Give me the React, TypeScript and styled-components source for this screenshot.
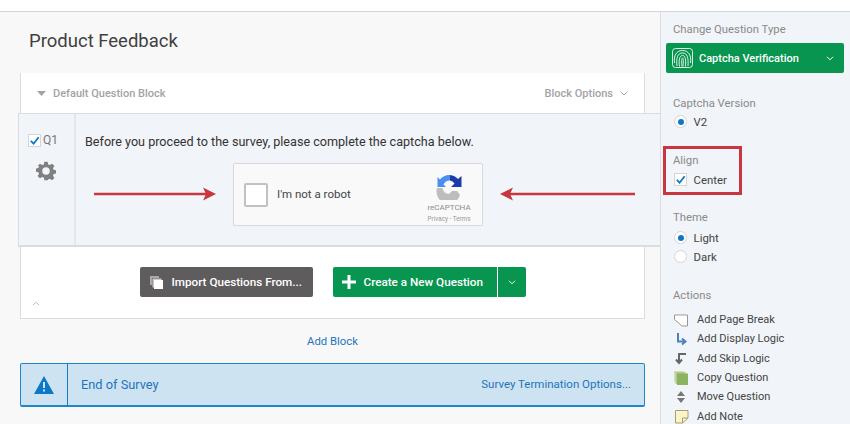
import React from 'react';
import styled, { createGlobalStyle } from 'styled-components';

const Global = createGlobalStyle`
  html, body { margin: 0; padding: 0; background: #fff; }
  body { font-family: "Roboto", "Liberation Sans", sans-serif; overflow: hidden; }
  * { box-sizing: border-box; }
`;

const Page = styled.div`
  width: 850px;
  height: 424px;
  padding-top: 11px;
  overflow: hidden;
  position: relative;
`;
const Columns = styled.div`
  display: flex;
  height: 413px;
  border-top: 1px solid #d6d6d6;
`;
const Main = styled.main`
  width: 660px;
  background: #f8f8f8;
  padding: 0 15px 0 20px;
`;
const Title = styled.h1`
  margin: 0;
  padding: 17px 0 0 9px;
  height: 61px;
  font-size: 18.5px;
  line-height: 24px;
  font-weight: 400;
  color: #404040;
`;
const Block = styled.section`
  width: 625px;
  height: 246px;
  background: #fff;
  border: 1px solid #dcdcdc;
  border-top: 0;
  display: flex;
  flex-direction: column;
  position: relative;
`;
const BlockHead = styled.div`
  height: 40px;
  display: flex;
  align-items: center;
  justify-content: space-between;
  padding: 0 16px 0 16px;
  font-size: 11px;
  font-weight: 500;
  color: #a3a3a3;
`;
const HeadLabel = styled.span`
  display: flex;
  align-items: center;
  gap: 7px;
`;
const Question = styled.div`
  margin-left: -3px;
  width: 642px;
  height: 134px;
  display: flex;
  background: #f1f4f8;
  border: 1px solid #d9dde2;
  border-right: 0;
  border-bottom-width: 2px;
  position: relative;
`;
const Gutter = styled.div`
  width: 57px;
  border-right: 2px solid #e4e8ed;
  display: flex;
  flex-direction: column;
  align-items: flex-start;
  padding: 19px 0 0 9px;
  gap: 14px;
`;
const QLabel = styled.div`
  display: flex;
  align-items: center;
  gap: 2px;
  font-size: 12px;
  color: #777;
`;
const Gear = styled.svg`
  margin-left: 8px;
`;
const Check = styled.span`
  width: 13px;
  height: 13px;
  background: #fff;
  border: 1px solid #d5d5d5;
  display: flex;
  align-items: center;
  justify-content: center;
`;
const QBody = styled.div`
  flex: 1;
  padding-top: 19px;
  padding-left: 9px;
`;
const QText = styled.div`
  font-size: 12.6px;
  line-height: 18px;
  color: #333;
`;
const Recaptcha = styled.div`
  margin: 12px 0 0 148px;
  width: 250px;
  height: 63px;
  background: #f9f9f9;
  border: 1px solid #d9d9d9;
  border-radius: 2px;
  display: flex;
  align-items: center;
  padding: 0 10px 0 10px;
  box-shadow: 0 0 2px rgba(0,0,0,.04);
`;
const RobotBox = styled.span`
  width: 24px;
  height: 24px;
  background: #fff;
  border: 2px solid #c1c1c1;
  border-radius: 2px;
`;
const RobotText = styled.span`
  margin-left: 9px;
  margin-top: -1px;
  flex: 1;
  font-size: 11.5px;
  color: #444;
`;
const Brand = styled.div`
  display: flex;
  flex-direction: column;
  align-items: center;
  width: 46px;
  padding-top: 8px;
`;
const BrandName = styled.span`
  font-size: 8px;
  line-height: 9px;
  margin-top: 3px;
  color: #8d8d8d;
`;
const BrandLinks = styled.span`
  font-size: 6.3px;
  line-height: 9px;
  margin-top: 3px;
  color: #9a9a9a;
  white-space: nowrap;
`;
const ArrowWrap = styled.div<{ $left: number }>`
  position: absolute;
  left: ${p => p.$left}px;
  top: 73px;
`;
const Buttons = styled.div`
  display: flex;
  justify-content: center;
  gap: 20px;
  margin-top: 20px;
`;
const Button = styled.button<{ $bg: string; $w: number }>`
  height: 30px;
  width: ${p => p.$w}px;
  border: 0;
  border-radius: 2px;
  background: ${p => p.$bg};
  color: #fff;
  font-family: inherit;
  font-size: 11.7px;
  font-weight: 500;
  display: flex;
  align-items: center;
  padding: 0;
  white-space: nowrap;
`;
const Split = styled.span`
  width: 29px;
  height: 30px;
  border-left: 1px solid #fff;
  margin-left: auto;
  display: flex;
  align-items: center;
  justify-content: center;
`;
const BtnIcon = styled.svg`
  margin: 0 8px 0 9px;
  flex: none;
`;
const Collapse = styled.svg`
  position: absolute;
  left: 11px;
  bottom: 12px;
`;
const AddBlock = styled.div`
  height: 44px;
  display: flex;
  align-items: center;
  justify-content: center;
  font-size: 11.3px;
  color: #1f74bd;
`;
const EndBar = styled.div`
  width: 625px;
  height: 44px;
  background: #cde3f2;
  border: 1px solid #1f86c9;
  border-bottom-width: 2px;
  border-radius: 2px;
  display: flex;
  align-items: center;
  color: #1f74bd;
`;
const EndIcon = styled.div`
  width: 47px;
  height: 100%;
  border-right: 1px solid #1a7cc0;
  display: flex;
  align-items: center;
  justify-content: center;
`;
const EndTitle = styled.span`
  margin-left: 13px;
  font-size: 12.8px;
  flex: 1;
`;
const EndOptions = styled.span`
  margin-right: 13px;
  font-size: 11.5px;
  margin-top: -2px;
`;
const Side = styled.aside`
  flex: 1;
  background: #f1f4f8;
  border-left: 1px solid #dcdee1;
  padding: 0 0 0 12px;
  position: relative;
`;
const SideHead = styled.div<{ $top: number }>`
  margin-top: ${p => p.$top}px;
  height: 14px;
  line-height: 14px;
  font-size: 11.3px;
  color: #8a8a8a;
`;
const TypeSelect = styled.div`
  margin: 6px 0 0 -7px;
  width: 178px;
  height: 30px;
  background: #07954f;
  border-radius: 2px;
  display: flex;
  align-items: center;
  padding: 0 10px 0 6px;
  gap: 6px;
  color: #fff;
  font-size: 11px;
  font-weight: 500;
`;
const Chevron = styled.svg`
  margin-left: auto;
`;
const Option = styled.div<{ $top?: number }>`
  margin-top: ${p => p.$top ?? 0}px;
  height: 19px;
  display: flex;
  align-items: center;
  gap: 6.500px;
  padding-left: 1px;
  font-size: 11.4px;
  color: #444;
`;
const Radio = styled.span<{ $on?: boolean }>`
  width: 13px;
  height: 13px;
  border-radius: 50%;
  background: #fff;
  border: 1px solid #d5d5d5;
  display: flex;
  align-items: center;
  justify-content: center;
  &::after {
    content: '';
    width: 6px;
    height: 6px;
    border-radius: 50%;
    background: ${p => (p.$on ? '#0b78c6' : 'transparent')};
  }
`;
const Highlight = styled.div`
  position: absolute;
  left: 2px;
  top: 134px;
  width: 79px;
  height: 49px;
  border: 3px solid #c9363f;
`;
const Actions = styled.div`
  margin-top: 7px;
  display: flex;
  flex-direction: column;
`;
const Action = styled.div`
  height: 19.3px;
  display: flex;
  align-items: center;
  font-size: 11px;
  color: #444;
  white-space: nowrap;
`;
const ActionIcon = styled.svg`
  width: 16px;
  height: 16px;
  margin-right: 8px;
  flex: none;
`;
const ArrowSvg = styled.svg<{ $flip?: boolean }>`
  display: block;
  transform: ${p => (p.$flip ? 'scaleX(-1)' : 'none')};
`;

const Tick = ({ s = 11 }: { s?: number }) => (
  <svg width={s} height={s} viewBox="0 0 12 12"><path d="M2 6.5 5 9.5 10.5 2.5" fill="none" stroke="#0b78c6" strokeWidth="2" /></svg>
);

const LongArrow = ({ w, flip }: { w: number; flip?: boolean }) => (
  <ArrowSvg $flip={flip} width={w} height="14" viewBox={`0 0 ${w} 14`}>
    <path d={`M0 7H${w - 8}`} stroke="#c9363f" strokeWidth="2.4" />
    <path d={`M${w - 13} 0.5 ${w} 7 ${w - 13} 13.5 ${w - 10} 7Z`} fill="#c9363f" />
  </ArrowSvg>
);

export default function App() {
  return (
    <Page>
      <Global />
      <Columns>
        <Main>
          <Title>Product Feedback</Title>
          <Block>
            <BlockHead>
              <HeadLabel>
                <svg width="9" height="5" viewBox="0 0 9 5"><path d="M0 0H9L4.5 5Z" fill="#a3a3a3" /></svg>
                Default Question Block
              </HeadLabel>
              <HeadLabel>
                Block Options
                <svg width="8" height="5" viewBox="0 0 8 5"><path d="M.5.5 4 4 7.500.5" fill="none" stroke="#a3a3a3" /></svg>
              </HeadLabel>
            </BlockHead>
            <Question>
              <Gutter>
                <QLabel><Check><Tick /></Check>Q1</QLabel>
                <Gear width="20" height="20" viewBox="0 0 24 24">
                  <path fill="#808080" fillRule="evenodd" d="M10 1h4l.6 3.100 2 .8L19.300 3.200l2.800 2.800-1.800 2.600.9 2 3 .6v3.900l-3 .6-.9 2 1.800 2.600-2.800 2.800-2.700-1.700-2 .8L14 23h-4l-.6-3.100-2-.8-2.700 1.700-2.800-2.800 1.800-2.600-.9-2-3-.6v-3.900l3-.6.9-2L1.900 6l2.800-2.800 2.700 1.700 2-.8ZM12 7.500a4.500 4.500 0 1 0 0 9 4.500 4.500 0 0 0 0-9Z" />
                </Gear>
              </Gutter>
              <QBody>
                <QText>Before you proceed to the survey, please complete the captcha below.</QText>
                <Recaptcha>
                  <RobotBox />
                  <RobotText>I'm not a robot</RobotText>
                  <Brand>
                    <svg width="26" height="26" viewBox="0 0 26 26">
                      <path d="M14 1A12 12 0 0 0 4 5.500L1.500 3V13H10L7.500 10.500A7 7 0 0 1 14 6.500Z" fill="#4a8ff0" />
                      <path d="M14 1A12 12 0 0 1 22 5L25.500 2V13H15L18.500 9.500A7 7 0 0 0 14 6.500Z" fill="#1c3aa9" />
                      <path d="M1 14H6.500A7 7 0 0 0 13 20L16 17H21L24 21A12 12 0 0 1 1 14Z" fill="#bdbdbd" />
                    </svg>
                    <BrandName>reCAPTCHA</BrandName>
                    <BrandLinks>Privacy - Terms</BrandLinks>
                  </Brand>
                </Recaptcha>
              </QBody>
              <ArrowWrap $left={75}><LongArrow w={122} /></ArrowWrap>
              <ArrowWrap $left={481}><LongArrow w={135} flip /></ArrowWrap>
            </Question>
            <Buttons>
              <Button $bg="#5f5c5e" $w={173}>
                <BtnIcon width="15" height="15" viewBox="0 0 15 15">
                  <path d="M1 1h9v2H3v7H1Z" fill="#aaa" />
                  <path d="M3.500 3.500h9v2h-7v7h-2Z" fill="#ccc" />
                  <rect x="5" y="5" width="9" height="9" fill="#fff" />
                </BtnIcon>
                Import Questions From...
              </Button>
              <Button $bg="#07954f" $w={193}>
                <BtnIcon width="14" height="14" viewBox="0 0 14 14">
                  <path d="M5.500 0h3v5.500H14v3H8.500V14h-3V8.500H0v-3h5.500Z" fill="#fff" />
                </BtnIcon>
                Create a New Question
                <Split>
                  <svg width="8" height="5" viewBox="0 0 8 5"><path d="M1 .8 4 3.800 7 .8" fill="none" stroke="#fff" /></svg>
                </Split>
              </Button>
            </Buttons>
            <Collapse width="8" height="5" viewBox="0 0 8 5"><path d="M1 4.200 4 1.200 7 4.200" fill="none" stroke="#bbb" /></Collapse>
          </Block>
          <AddBlock>Add Block</AddBlock>
          <EndBar>
            <EndIcon>
              <svg width="20" height="18" viewBox="0 0 20 18">
                <path fillRule="evenodd" fill="#0b78c6" d="M10 0 20 18H0ZM9 6v6h2V6ZM9 13.500v2h2v-2Z" />
              </svg>
            </EndIcon>
            <EndTitle>End of Survey</EndTitle>
            <EndOptions>Survey Termination Options...</EndOptions>
          </EndBar>
        </Main>
        <Side>
          <SideHead $top={11}>Change Question Type</SideHead>
          <TypeSelect>
            <svg width="21" height="20" viewBox="0 0 21 20" fill="none" stroke="#dff2e8" strokeWidth="1">
              <rect x=".5" y=".5" width="20" height="19" rx="3" />
              <path d="M2.500 15C1.500 8 4 2.500 10.500 2.500S19.500 8 18.500 15M5 18C4 10 5.500 5 10.500 5S16.500 10 16 18M7.500 18.500C6.500 12 7.500 7.500 10.500 7.500S14 12 13.500 18.500M10 18.500C9.500 14 9.500 10 10.500 10S11.500 14 11 18.500" />
            </svg>
            Captcha Verification
            <Chevron width="8" height="5" viewBox="0 0 8 5"><path d="M1 .8 4 3.800 7 .8" fill="none" stroke="#fff" /></Chevron>
          </TypeSelect>
          <SideHead $top={24}>Captcha Version</SideHead>
          <Option $top={1}><Radio $on />V2</Option>
          <SideHead $top={23}>Align</SideHead>
          <Option $top={2}><Check><Tick /></Check>Center</Option>
          <SideHead $top={22}>Theme</SideHead>
          <Option $top={3}><Radio $on />Light</Option>
          <Option><Radio />Dark</Option>
          <SideHead $top={23}>Actions</SideHead>
          <Actions>
            <Action>
              <ActionIcon viewBox="0 0 16 16"><path d="M1.500 3H14.500V14H9L1.500 7.500Z" fill="#fff" stroke="#999" /></ActionIcon>
              Add Page Break
            </Action>
            <Action>
              <ActionIcon viewBox="0 0 16 16"><path d="M5 2V10.500H11M9 7.500 12.500 10.500 9 13.500" fill="none" stroke="#4b82c3" strokeWidth="2" /></ActionIcon>
              Add Display Logic
            </Action>
            <Action>
              <ActionIcon viewBox="0 0 16 16"><path d="M13 4H6V12M3 9.500 6 13 9 9.500" fill="none" stroke="#666" strokeWidth="2" /></ActionIcon>
              Add Skip Logic
            </Action>
            <Action>
              <ActionIcon viewBox="0 0 16 16">
                <rect x="1" y="1" width="10" height="11" fill="#cfe0b8" />
                <rect x="2.500" y="2" width="10" height="12" fill="#b0cd8e" />
                <rect x="4" y="3.500" width="11" height="11.500" fill="#8cb35f" />
              </ActionIcon>
              Copy Question
            </Action>
            <Action>
              <ActionIcon viewBox="0 0 16 16"><path d="M8 2 12 7H4ZM4 9H12L8 14Z" fill="#777" /></ActionIcon>
              Move Question
            </Action>
            <Action>
              <ActionIcon viewBox="0 0 16 16"><path d="M2.500 2.500H15V10L9.500 15H2.500ZM9.500 15V10H15" fill="#fbf4c8" stroke="#a89f75" /></ActionIcon>
              Add Note
            </Action>
          </Actions>
          <Highlight />
        </Side>
      </Columns>
    </Page>
  );
}
